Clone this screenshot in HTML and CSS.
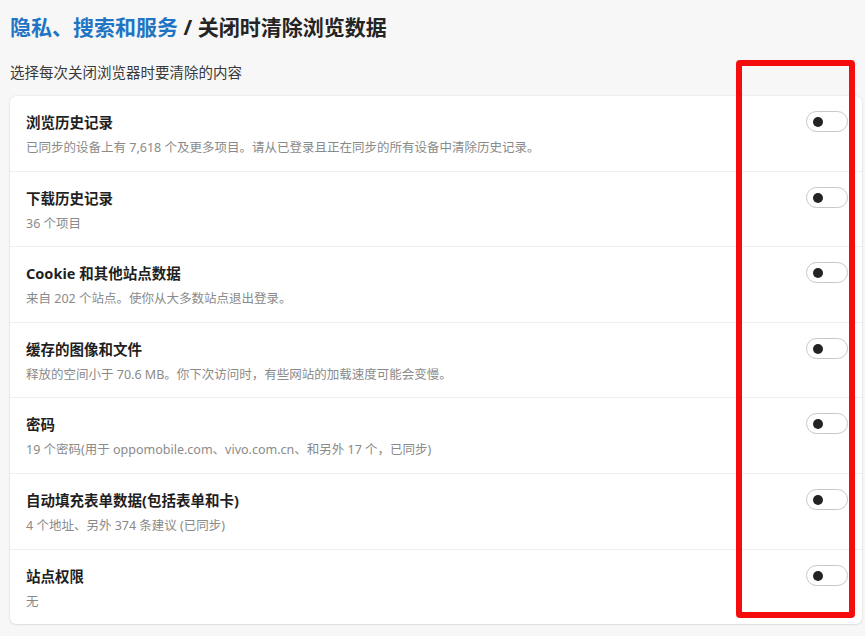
FILE: index.html
```html
<!DOCTYPE html>
<html>
<head>
<meta charset="utf-8">
<link rel="stylesheet" href="styles.css">
</head>
<body>

<div class="page">
  <h1 class="heading"><span class="crumb">隐私、搜索和服务</span> / 关闭时清除浏览数据</h1>
  <div class="intro">选择每次关闭浏览器时要清除的内容</div>

  <div class="card">
    <div class="row">
      <div class="text">
        <div class="label">浏览历史记录</div>
        <div class="desc">已同步的设备上有 7,618 个及更多项目。请从已登录且正在同步的所有设备中清除历史记录。</div>
      </div>
      <span class="toggle"></span>
    </div>
    <div class="row">
      <div class="text">
        <div class="label">下载历史记录</div>
        <div class="desc">36 个项目</div>
      </div>
      <span class="toggle"></span>
    </div>
    <div class="row">
      <div class="text">
        <div class="label">Cookie 和其他站点数据</div>
        <div class="desc">来自 202 个站点。使你从大多数站点退出登录。</div>
      </div>
      <span class="toggle"></span>
    </div>
    <div class="row">
      <div class="text">
        <div class="label">缓存的图像和文件</div>
        <div class="desc">释放的空间小于 70.6 MB。你下次访问时，有些网站的加载速度可能会变慢。</div>
      </div>
      <span class="toggle"></span>
    </div>
    <div class="row">
      <div class="text">
        <div class="label">密码</div>
        <div class="desc">19 个密码(用于 oppomobile.com、vivo.com.cn、和另外 17 个，已同步)</div>
      </div>
      <span class="toggle"></span>
    </div>
    <div class="row">
      <div class="text">
        <div class="label">自动填充表单数据(包括表单和卡)</div>
        <div class="desc">4 个地址、另外 374 条建议 (已同步)</div>
      </div>
      <span class="toggle"></span>
    </div>
    <div class="row">
      <div class="text">
        <div class="label">站点权限</div>
        <div class="desc">无</div>
      </div>
      <span class="toggle"></span>
    </div>
  </div>
</div>

<div class="highlight"></div>

</body>
</html>
```

FILE: styles.css
```css
body {
  margin: 0;
  background-color: #f7f7f7;
  font-family: "Noto Sans", "Noto Sans CJK SC", sans-serif;
  color: #1b1b1b;
}

.page {
  padding: 13px 3px 10px 10px;
}

.heading {
  margin: 0;
  font-size: 21px;
  line-height: 28px;
  font-weight: 700;
  color: #242424;
}

.crumb {
  color: #1f74c4;
}

.intro {
  margin-top: 21px;
  font-size: 14.5px;
  line-height: 20px;
  color: #3a3a3a;
}

.card {
  margin-top: 14px;
  background-color: white;
  border-radius: 6px;
  box-shadow: 0 0 2px rgba(0, 0, 0, 0.12), 0 1px 2px rgba(0, 0, 0, 0.08);
}

.row {
  display: flex;
  align-items: flex-start;
  justify-content: space-between;
  padding: 16px 14px 14.6px 16px;
  border-bottom: 1px solid #efefef;
}

.row:last-child {
  border-bottom: none;
}

.label {
  font-size: 14.5px;
  line-height: 20px;
  font-weight: 700;
  color: #1f1f1f;
}

.desc {
  margin-top: 8px;
  font-size: 12.5px;
  line-height: 16px;
  color: #8a8a8a;
}

.toggle {
  position: relative;
  margin-top: -1px;
  width: 40px;
  height: 19px;
  border: 1px solid #c8c8c8;
  border-radius: 11px;
  box-sizing: content-box;
}

.toggle::after {
  content: "";
  position: absolute;
  left: 6px;
  top: 5px;
  width: 10px;
  height: 10px;
  border-radius: 50%;
  background-color: #232323;
}

.highlight {
  position: absolute;
  left: 736px;
  top: 60px;
  width: 107px;
  height: 546px;
  border: 6px solid #f50d0d;
  border-radius: 4px;
}
```
